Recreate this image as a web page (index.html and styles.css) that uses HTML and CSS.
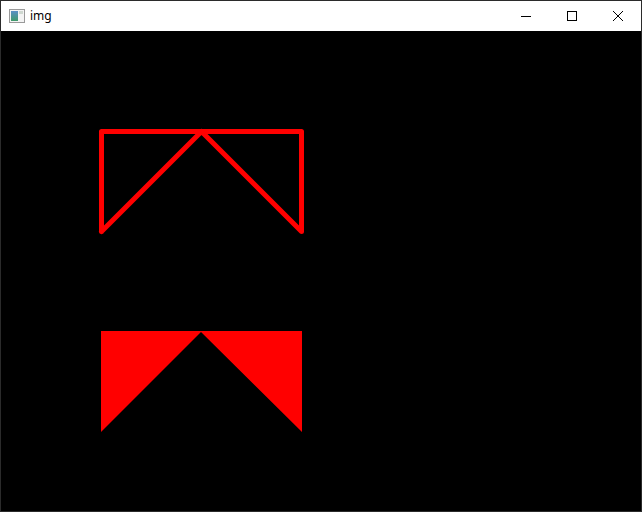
FILE: index.html
```html
<!DOCTYPE html>
<html>
<head>
<meta charset="utf-8">
<link rel="stylesheet" href="styles.css">
</head>
<body>
<div class="window">
  <div class="titlebar">
    <div class="title">
      <svg class="app-icon" width="16" height="14" viewBox="0 0 16 14">
        <defs>
          <linearGradient id="g" x1="0" y1="0" x2="0" y2="1">
            <stop offset="0" stop-color="#5b8fc7"/>
            <stop offset="1" stop-color="#3f9a6a"/>
          </linearGradient>
        </defs>
        <rect x="0.5" y="0.5" width="15" height="13" fill="#f4f4f4" stroke="#9a9a9a"/>
        <rect x="2" y="2" width="7" height="10" fill="url(#g)"/>
        <rect x="10" y="2" width="4" height="3" fill="#cfd8d0"/>
      </svg>
      <span class="title-text">img</span>
    </div>
    <div class="controls">
      <div class="ctl">
        <svg width="10" height="10" viewBox="0 0 10 10"><path d="M0 5.5H10" stroke="#000" stroke-width="1"/></svg>
      </div>
      <div class="ctl">
        <svg width="10" height="10" viewBox="0 0 10 10"><rect x="0.5" y="0.5" width="9" height="9" fill="none" stroke="#000"/></svg>
      </div>
      <div class="ctl">
        <svg width="10" height="10" viewBox="0 0 10 10"><path d="M0 0L10 10M10 0L0 10" stroke="#000" stroke-width="1"/></svg>
      </div>
    </div>
  </div>
  <svg class="canvas" width="640" height="480" viewBox="0 0 640 480">
    <rect width="640" height="480" fill="#000"/>
    <polyline points="100.5,200.5 100.5,100.5 300.5,100.5 300.5,200.5 200.5,100.5 100.5,200.5" fill="none" stroke="#ff0000" stroke-width="5" stroke-linejoin="round" stroke-linecap="round"/>
    <polygon points="100,300 301,300 301,401 200,301 100,401" fill="#ff0000"/>
  </svg>
</div>
</body>
</html>
```
FILE: styles.css
```css
html, body {
  margin: 0;
  padding: 0;
  background: #000;
}
.window {
  width: 640px;
  height: 510px;
  border: 1px solid #2b2b2b;
  display: flex;
  flex-direction: column;
  background: #000;
}
.titlebar {
  height: 30px;
  background: #fff;
  display: flex;
  justify-content: space-between;
  align-items: stretch;
}
.title {
  display: flex;
  align-items: center;
  padding-left: 8px;
}
.app-icon {
  display: block;
  margin-top: -1px;
}
.title-text {
  margin-left: 5px;
  font-family: "Noto Sans", "Open Sans", sans-serif;
  font-size: 12px;
  color: #000;
  margin-top: -1px;
}
.controls {
  display: flex;
}
.ctl {
  width: 46px;
  display: flex;
  align-items: center;
  justify-content: center;
}
.ctl svg {
  display: block;
}
.canvas {
  display: block;
}
```
